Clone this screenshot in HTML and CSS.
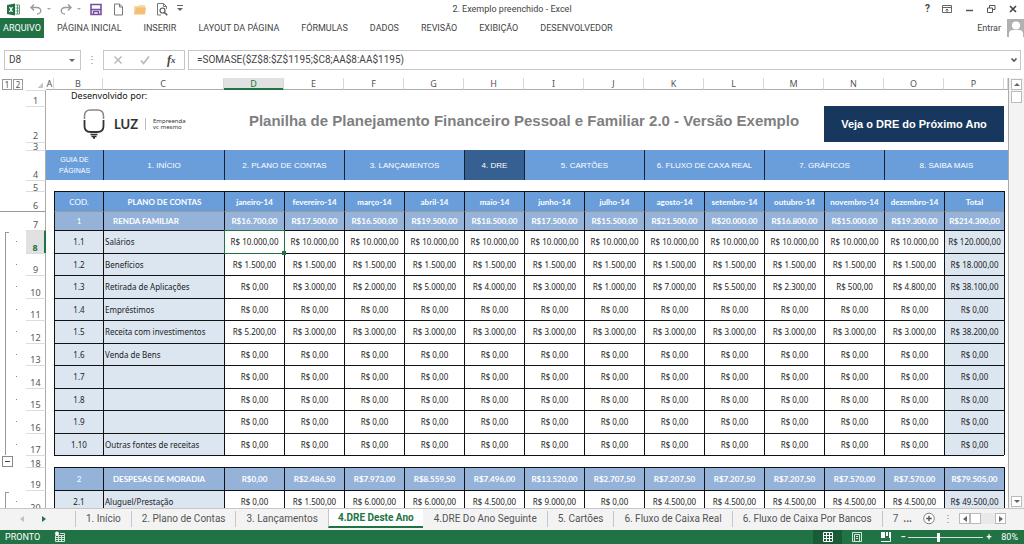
FILE: index.html
```html
<!DOCTYPE html>
<html lang="pt-BR">
<head>
<meta charset="utf-8">
<title>2. Exemplo preenchido - Excel</title>
<link rel="stylesheet" href="styles.css">
</head>
<body>
<header class="titlebar">
  <div class="quick">
    <svg class="icon" viewBox="0 0 14 13" aria-hidden="true"><path d="M0 2l8-1.500v12L0 11z" fill="#217346"/><path d="M8.500 2h4v9h-4M10.500 2v9M8.500 5h4M8.500 8h4" fill="none" stroke="#5b9b78"/><path d="M2.500 4l3 5M5.500 4l-3 5" stroke="#fff" stroke-width="1.300"/></svg>
    <button class="tool" aria-label="Desfazer"><svg class="icon" viewBox="0 0 14 13"><path d="M5 1.500L2 4.500l3 3M2 4.500h6a3.500 3 0 0 1 0 6.500" fill="none" stroke="#9a9a9a" stroke-width="1.400"/></svg></button>
    <i class="caret pale"></i>
    <button class="tool" aria-label="Refazer"><svg class="icon" viewBox="0 0 14 13"><path d="M9 1.500l3 3-3 3M12 4.500H6a3.500 3 0 0 0 0 6.500" fill="none" stroke="#9a9a9a" stroke-width="1.400"/></svg></button>
    <i class="caret pale"></i>
    <button class="tool save" aria-label="Salvar"><svg class="icon" viewBox="0 0 14 13"><path d="M2 1.500h10v10H2z" fill="#fff" stroke="#7a4fa3" stroke-width="1.600"/><path d="M2 6.500h10M4.500 12V8.500h5V12" fill="none" stroke="#7a4fa3" stroke-width="1.500"/></svg></button>
    <button class="tool" aria-label="Novo"><svg class="icon" viewBox="0 0 14 13"><path d="M3.500 1h5l3 3v8h-8zM8.500 1v3h3" fill="#fff" stroke="#777"/></svg></button>
    <button class="tool" aria-label="Abrir"><svg class="icon" viewBox="0 0 14 13"><path d="M1 11V3h4l1-1h6v3" fill="#f7d9a5"/><path d="M1 11.500l2-7h10l-1 7z" fill="#f3bf74"/></svg></button>
    <button class="tool" aria-label="Visualizar impressão"><svg class="icon" viewBox="0 0 14 13"><path d="M6 12H2.500V.5h6l3 3V6M8.500.5v3h3" fill="none" stroke="#777"/><circle cx="7.500" cy="7.500" r="2.500" fill="#fff" stroke="#555" stroke-width="1.200"/><path d="M9.500 9.500l2.800 2.800" stroke="#555" stroke-width="1.500"/></svg></button>
    <i class="caret bar"></i>
  </div>
  <h1 class="caption">2. Exemplo preenchido - Excel</h1>
  <div class="window-buttons">
    <button class="tool" aria-label="Ajuda"><b>?</b></button>
    <button class="tool" aria-label="Opções da faixa"><svg class="icon slim" viewBox="0 0 10 10"><path d="M.5 1.500h9v7h-9zM.5 3.500h9M5 8V5M3.500 6.300L5 5l1.500 1.300" fill="none" stroke="#666"/></svg></button>
    <button class="tool" aria-label="Minimizar"><svg class="icon slim" viewBox="0 0 10 10"><path d="M2 6.500h7" stroke="#555" stroke-width="1.500"/></svg></button>
    <button class="tool" aria-label="Restaurar"><svg class="icon slim" viewBox="0 0 10 10"><path d="M1.500 4h5v4.500h-5zM3.500 4V1.500h5.500v4H6.500" fill="none" stroke="#555"/></svg></button>
    <button class="tool" aria-label="Fechar"><svg class="icon slim" viewBox="0 0 10 10"><path d="M2 2l6 6M8 2l-6 6" stroke="#444" stroke-width="1.600"/></svg></button>
  </div>
</header>
<nav class="ribbon">
  <button class="file">ARQUIVO</button>
  <button>PÁGINA INICIAL</button>
  <button>INSERIR</button>
  <button>LAYOUT DA PÁGINA</button>
  <button>FÓRMULAS</button>
  <button>DADOS</button>
  <button>REVISÃO</button>
  <button>EXIBIÇÃO</button>
  <button>DESENVOLVEDOR</button>
  <a class="sign-in" href="#entrar">Entrar
    <svg class="avatar" viewBox="0 0 17 18" aria-hidden="true"><path d="M0 0h17v18H0z" fill="#b1b1b1"/><circle cx="9" cy="6.500" r="4" fill="#fff"/><path d="M2 18v-3q0-4 4-4h6q4 0 4 4v3z" fill="#fff"/></svg>
  </a>
</nav>
<div class="formula-bar">
  <label class="name-box"><input aria-label="Caixa de nome" value="D8"><i class="caret"></i></label>
  <span class="grip">⋮</span>
  <div class="formula-tools">
    <button class="tool" aria-label="Cancelar"><svg class="icon slim" viewBox="0 0 10 10"><path d="M1.500 1.500l7 7M8.500 1.500l-7 7" stroke="#b5b5b5" stroke-width="1.400"/></svg></button>
    <button class="tool" aria-label="Inserir"><svg class="icon slim" viewBox="0 0 10 10"><path d="M1 5.500l2.500 3L9 1.500" fill="none" stroke="#b5b5b5" stroke-width="1.500"/></svg></button>
    <button class="tool fx" aria-label="Inserir função">f<small>x</small></button>
  </div>
  <label class="formula"><input aria-label="Fórmula" value="=SOMASE($Z$8:$Z$1195;$C8;AA$8:AA$1195)"><svg class="icon slim" viewBox="0 0 10 10"><path d="M2.500 3.500L5 6l2.500-2.500" fill="none" stroke="#555" stroke-width="1.600"/></svg></label>
</div>
<main class="workspace">
  <div class="sheet">
    <table class="grid">
      <colgroup>
        <col class="w-outline"><col class="w-head"><col class="w-a"><col class="w-b"><col class="w-c">
        <col span="13">
        <col class="w-edge">
      </colgroup>
      <thead>
        <tr class="letters">
          <td class="levels"><div><button>1</button><button>2</button></div></td>
          <td class="corner"></td>
          <th>A</th><th>B</th><th>C</th><th class="picked">D</th><th>E</th><th>F</th><th>G</th><th>H</th><th>I</th><th>J</th><th>K</th><th>L</th><th>M</th><th>N</th><th>O</th><th>P</th><th></th>
        </tr>
      </thead>
      <tbody id="rows">
        <tr class="r1"><td></td><th>1</th><td></td><td class="credit" colspan="3">Desenvolvido por:</td><td colspan="13"></td></tr>
        <tr class="r2"><td></td><th>2</th><td></td>
          <td colspan="2">
            <div class="brand">
              <svg class="bulb" viewBox="0 0 22 30" aria-hidden="true"><path d="M1.500 10V7q0-6 6-6h7q6 0 6 6v3" fill="none" stroke="#888" stroke-width="1.500"/><path d="M1.500 11v6q0 6 6 6h7q6 0 6-6v-6" fill="none" stroke="#333" stroke-width="1.800"/><path d="M7.500 25.500h7M8.500 27.500h5M10 29h2" stroke="#333" stroke-width="1.300"/></svg>
              <strong>LUZ</strong><span>Empreenda<br>vc mesmo</span>
            </div>
          </td>
          <td class="sheet-title" colspan="10">Planilha de Planejamento Financeiro Pessoal e Familiar 2.0 - Versão Exemplo</td>
          <td colspan="3"><a class="next-year" href="#proximo">Veja o DRE do Próximo Ano</a></td><td></td>
        </tr>
        <tr class="r3"><td></td><th>3</th><td colspan="17"></td></tr>
        <tr class="r4"><td></td><th>4</th>
          <td class="guide" colspan="2">GUIA DE PÁGINAS</td>
          <td><a href="#inicio">1. INÍCIO</a></td>
          <td colspan="2"><a href="#plano">2. PLANO DE CONTAS</a></td>
          <td colspan="2"><a href="#lancamentos">3. LANÇAMENTOS</a></td>
          <td class="current"><a href="#dre">4. DRE</a></td>
          <td colspan="2"><a href="#cartoes">5. CARTÕES</a></td>
          <td colspan="2"><a href="#fluxo">6. FLUXO DE CAXA REAL</a></td>
          <td colspan="2"><a href="#graficos">7. GRÁFICOS</a></td>
          <td colspan="3"><a href="#mais">8. SAIBA MAIS</a></td>
        </tr>
        <tr class="r5"><td></td><th>5</th><td colspan="17"></td></tr>
      </tbody>
    </table>
  </div>
  <div class="scroll-v">
    <button class="step" aria-label="Para cima"><i class="caret up"></i></button>
    <div class="thumb"></div>
    <button class="step last" aria-label="Para baixo"><i class="caret"></i></button>
  </div>
</main>
<nav class="tabs">
  <div class="tab-arrows"><button class="tool" aria-label="Anterior"><i class="arrow left pale"></i></button><button class="tool" aria-label="Próxima"><i class="arrow right green"></i></button></div>
  <button class="tab">1. Início</button>
  <button class="tab">2. Plano de Contas</button>
  <button class="tab">3. Lançamentos</button>
  <button class="tab active">4.DRE Deste Ano</button>
  <button class="tab">4.DRE Do Ano Seguinte</button>
  <button class="tab">5. Cartões</button>
  <button class="tab">6. Fluxo de Caixa Real</button>
  <button class="tab">6. Fluxo de Caixa Por Bancos</button>
  <button class="tab cut">7 &nbsp;<b>...</b></button>
  <button class="tool" aria-label="Nova planilha"><svg class="icon" viewBox="0 0 14 14"><circle cx="7" cy="7" r="5.700" fill="#fff" stroke="#777"/><path d="M4 7h6M7 4v6" stroke="#555" stroke-width="1.500"/></svg></button>
  <span class="grip">⋮</span>
  <div class="scroll-h"><button class="step" aria-label="Esquerda"><i class="arrow left"></i></button><div class="thumb"></div><button class="step last" aria-label="Direita"><i class="arrow right"></i></button></div>
</nav>
<footer class="status">
  <span>PRONTO</span>
  <svg class="icon macro" viewBox="0 0 12 12" aria-hidden="true"><path d="M1.500 4.500h9v6h-9zM1.500 6.500h9M1.500 8.500h9M4.500 4.500v6M7.500 4.500v6M6 2.500h4.500v2" fill="none" stroke="#d5e6dc"/><circle cx="3" cy="2.500" r="2" fill="#fff"/></svg>
  <div class="views">
    <button class="view on" aria-label="Normal"><svg class="icon" viewBox="0 0 12 12"><path d="M1.500 1.500h9v9h-9zM1.500 4.500h9M1.500 7.500h9M4.500 1.500v9M7.500 1.500v9" fill="none" stroke="#fff"/></svg></button>
    <button class="view" aria-label="Layout da página"><svg class="icon" viewBox="0 0 12 12"><path d="M1.500 1.500h9v9h-9zM3.500 3.500h5v7h-5zM5 5.500h2M5 7.500h2" fill="none" stroke="#d5e6dc"/></svg></button>
    <button class="view" aria-label="Quebra de página"><svg class="icon" viewBox="0 0 12 12"><path d="M1 1h4v6H1zM6 1h2v4H6zM9 1h2v6H9z" fill="#fff"/><path d="M1 10.500h9.500V1" fill="none" stroke="#fff"/></svg></button>
  </div>
  <div class="zoom"><b>−</b><input type="range" aria-label="Zoom" min="10" max="200" value="86"><b>+</b></div>
  <span>80%</span>
</footer>
<script src="rows.js"></script>
</body>
</html>
```
FILE: styles.css
```css
* { box-sizing: border-box; }
body {
  margin: 0;
  height: 100vh;
  display: flex;
  flex-direction: column;
  overflow: hidden;
  background: #fff;
  color: #444;
  font: 10px/12px Roboto, "Noto Sans", sans-serif;
}
button, input { margin: 0; padding: 0; border: 0; background: none; color: inherit; font: inherit; }
a { color: inherit; text-decoration: none; }
.tool { display: flex; align-items: center; justify-content: center; }
.icon { display: block; width: 14px; height: 13px; }
.icon.slim { width: 10px; height: 10px; }
.caret { border: 3px solid transparent; border-top-color: #666; border-bottom: 0; }
.caret.pale { border-width: 2px 2px 0; border-top-color: #aaa; }
.caret.up { border-top: 0; border-bottom: 3px solid #666; }
.caret.bar { position: relative; }
.caret.bar::before { content: ""; position: absolute; left: -3px; top: -6px; width: 6px; height: 1px; background: #666; }
.arrow { border: 3px solid transparent; }
.arrow.left { border-right: 4px solid #666; border-left: 0; }
.arrow.right { border-left: 4px solid #666; border-right: 0; }
.arrow.left.pale { border-right-color: #c0c0c0; }
.arrow.right.green { border-left-color: #217346; }

.titlebar { display: grid; grid-template-columns: 1fr auto 1fr; align-items: center; height: 18px; flex: none; }
.quick { display: flex; align-items: center; gap: 4px; padding-left: 7px; }
.quick .tool:not(.save) { margin-left: 4px; }
.quick .save { margin-left: 4px; }
.quick .caret.bar { margin-left: 4px; }
.caption { margin: 0; font-size: 9px; font-weight: 400; }
.window-buttons { display: flex; justify-content: flex-end; gap: 12px; padding-right: 6px; }

.ribbon { display: flex; align-items: center; gap: 22px; height: 20px; flex: none; font-size: 9px; }
.ribbon .file { align-self: stretch; width: 44px; margin-right: -9px; background: #217346; color: #fff; }
.sign-in { display: flex; align-items: center; gap: 6px; margin-left: auto; }
.avatar { width: 17px; height: 18px; }

.formula-bar { display: flex; height: 20px; margin: 12px 3px 8px 4px; flex: none; }
.name-box, .formula, .formula-tools { display: flex; align-items: center; border: 1px solid #c6c6c6; }
.name-box { width: 77px; padding: 0 5px 0 4px; }
.name-box input { flex: 1; min-width: 0; }
.grip { width: 22px; text-align: center; line-height: 20px; color: #888; }
.formula-tools { width: 82px; justify-content: space-around; }
.fx { font: italic 700 12px/14px "Liberation Serif", serif; }
.fx small { font-size: 9px; }
.formula { flex: 1; margin-left: 3px; padding: 0 1px 0 8px; }
.formula input { flex: 1; min-width: 0; }

.workspace { display: flex; flex: 1; min-height: 0; overflow: hidden; }
.sheet { flex: 1; min-width: 0; overflow: hidden; }
.grid { width: 100%; table-layout: fixed; border-collapse: separate; border-spacing: 0; color: #222; font: 8px/10px "Noto Sans", "Open Sans", sans-serif; text-align: center; }
.grid td, .grid th { padding: 0; font-weight: 400; }
.w-outline { width: 26px; }
.w-head { width: 20px; }
.w-a { width: 8px; }
.w-b { width: 49px; }
.w-c { width: 121px; }
.w-edge { width: 4px; }

.letters { height: 12px; color: #555; font-size: 9px; line-height: 11px; }
.letters th { border-right: 1px solid #d8d8d8; border-bottom: 1px solid #ababab; }
.letters .picked { background: #e1e1e1; border-bottom-color: #217346; box-shadow: inset 0 -1px #217346; color: #217346; }
.levels div { display: flex; gap: 1px; padding-left: 2px; }
.levels button { width: 10px; height: 11px; border: 1px solid #999; font-size: 8px; line-height: 9px; }
.corner { background: linear-gradient(135deg, transparent 60%, #c8c8c8 60%) 10px 3px / 7px 7px no-repeat; }

.grid tbody th { border-right: 1px solid #ababab; border-top: 1px solid #dcdcdc; color: #555; font-size: 9px; line-height: 7px; vertical-align: bottom; }
.grid tbody .r1 th, .grid tbody .r4 th, .grid tbody .n:not(.gap) th { padding-bottom: 2px; }
.grid tbody .r2 th { padding-bottom: 3px; }
.r1 { height: 16px; }
.r2 { height: 36px; }
.r3 { height: 8px; }
.r4 { height: 30px; }
.r5 { height: 11px; }
.grid .credit { padding-left: 17px; text-align: left; vertical-align: top; font-size: 9px; line-height: 12px; color: #111; }
.brand { display: flex; align-items: center; padding-left: 29px; text-align: left; color: #333; }
.bulb { width: 22px; height: 30px; }
.brand strong { margin: 0 7px 0 9px; font: 700 13px/16px Lato, sans-serif; }
.brand span { padding-left: 7px; border-left: 1px solid #bbb; font-size: 6px; line-height: 6px; }
.grid .sheet-title { padding-bottom: 6px; color: #7f7f7f; font: 700 15px/20px "Liberation Sans", sans-serif; white-space: nowrap; }
.next-year { display: flex; align-items: center; justify-content: center; height: 36px; background: #17375e; color: #fff; font: 700 11px/14px "Liberation Sans", sans-serif; }
.r4 td:not(:first-child) { background: #6a9eda; color: #fff; border-left: 1px solid #17202e; font: 8px/11px "Liberation Sans", sans-serif; }
.grid .r4 .guide { padding: 0 8px; border-left: 0; font-size: 7px; }
.grid .r4 .current { background: #376092; }

.n { height: 22px; }
.n.tall { height: 23px; }
.n.labels { height: 20px; }
.n.gap { height: 12px; }
.n.freeze { height: 19px; }
.cell { border-left: 1px solid #111; border-top: 1px solid #111; white-space: nowrap; }
.edge { border-left: 1px solid #111; }
.gap .cell, .gap .edge { border-left: 0; }
.code, .name, .sum { background: #dce6f1; }
.grid .name { padding-left: 1px; text-align: left; }
.grid .labels .cell, .grid .head .cell { color: #fff; font-weight: 700; font-family: Lato, sans-serif; }
.labels .cell { background: #6a9eda; }
.head .cell { background: #95b3d9; }
.grid .labels .code, .grid .head .code { font-weight: 400; }
.grid .labels .name { text-align: center; }
.grid .head .name { padding-left: 9px; }
.freeze .cell, .grid .freeze th, .freeze .edge { border-top-color: #9a9a9a; }
.freeze .side { border-top: 1px solid #9a9a9a; }
.group { background: linear-gradient(#888, #888) 16px 50% / 1px 1px no-repeat, linear-gradient(#999, #999) 5px 0 / 1px 100% no-repeat; }
.group.first { background: linear-gradient(#888, #888) 16px 50% / 1px 1px no-repeat, linear-gradient(#999, #999) 5px 2px / 1px 100% no-repeat, linear-gradient(#999, #999) 5px 2px / 4px 1px no-repeat; }
.collapse { display: block; width: 11px; height: 11px; margin-left: 2px; border: 1px solid #888; background: linear-gradient(#444, #444) 50% 50% / 5px 1px no-repeat #fff; }
.grid tbody .picked-row th { background: #e1e1e1; color: #217346; font-weight: 700; border-right: 2px solid #217346; }
.selected { position: relative; }
.selected::before { content: ""; position: absolute; inset: -1px -1px -1px -1px; border: 1px solid #217346; z-index: 1; }
.selected::after { content: ""; position: absolute; right: -2px; bottom: -2px; width: 4px; height: 4px; background: #217346; z-index: 2; }

.scroll-v { display: flex; flex-direction: column; width: 16px; padding: 1px 2px; gap: 1px; border-left: 1px solid #ababab; background: #f3f3f3; }
.step { display: flex; align-items: center; justify-content: center; width: 11px; height: 11px; border: 1px solid #bbb; background: #fff; }
.thumb { width: 11px; height: 12px; border: 1px solid #bbb; background: #fff; }
.scroll-v .last { margin-top: auto; }

.tabs { display: flex; align-items: center; height: 22px; flex: none; padding: 0 18px 2px 0; border-top: 1px solid #c6c6c6; background: #f3f3f3; color: #555; font-size: 10px; }
.tab-arrows { display: flex; flex: none; gap: 18px; width: 75px; padding-left: 20px; }
.tab { height: 16px; padding: 0 10px; border-left: 1px solid #c6c6c6; white-space: nowrap; }
.tab.active { align-self: stretch; height: auto; padding: 0 9px; border-bottom: 2px solid #217346; background: #fff; color: #217346; font-weight: 700; }
.tab.active + .tab { border-left-color: transparent; }
.tabs .grip { margin-left: auto; }
.scroll-h { display: flex; background: #e9e9e9; width: 47px; }
.scroll-h .step, .scroll-h .thumb { flex: none; height: 11px; }
.scroll-h .last { margin-left: auto; }

.status { display: flex; align-items: center; height: 14px; flex: none; padding: 0 6px 0 5px; background: #217346; color: #fff; font-size: 9px; }
.status .icon { width: 12px; height: 12px; }
.macro { margin-left: 14px; }
.views { display: flex; margin-left: auto; }
.view { display: flex; align-items: center; justify-content: center; width: 29px; height: 14px; }
.view.on { background: #185c37; }
.zoom { display: flex; align-items: center; gap: 3px; margin: 0 10px 0 0; }
.zoom input { width: 75px; height: 10px; appearance: none; background: linear-gradient(#cfe3d7, #cfe3d7) 0 50% / 100% 1px no-repeat; }
.zoom input::-webkit-slider-thumb { appearance: none; width: 3px; height: 9px; background: #fff; }
```
FILE: rows.js
```js
const zeros = Array(13).fill("0,00");
const same = (value, total) => [...Array(12).fill(value), total];

const rows = [
  { n: 6, kind: "labels", code: "COD.", name: "PLANO DE CONTAS", values: ["janeiro-14", "fevereiro-14", "março-14", "abril-14", "maio-14", "junho-14", "julho-14", "agosto-14", "setembro-14", "outubro-14", "novembro-14", "dezembro-14", "Total"] },
  { n: 7, kind: "head freeze", code: "1", name: "RENDA FAMILIAR", values: ["16.700,00", "17.500,00", "16.500,00", "19.500,00", "18.500,00", "17.500,00", "15.500,00", "21.500,00", "20.000,00", "16.800,00", "15.000,00", "19.300,00", "214.300,00"] },
  { n: 8, kind: "tall picked-row", group: "group first", code: "1.1", name: "Salários", values: same("10.000,00", "120.000,00") },
  { n: 9, kind: "", group: "group", code: "1.2", name: "Benefícios", values: same("1.500,00", "18.000,00") },
  { n: 10, kind: "tall", group: "group", code: "1.3", name: "Retirada de Aplicações", values: ["0,00", "3.000,00", "2.000,00", "5.000,00", "4.000,00", "3.000,00", "1.000,00", "7.000,00", "5.500,00", "2.300,00", "500,00", "4.800,00", "38.100,00"] },
  { n: 11, kind: "", group: "group", code: "1.4", name: "Empréstimos", values: zeros },
  { n: 12, kind: "tall", group: "group", code: "1.5", name: "Receita com investimentos", values: ["5.200,00", ...Array(11).fill("3.000,00"), "38.200,00"] },
  { n: 13, kind: "", group: "group", code: "1.6", name: "Venda de Bens", values: zeros },
  { n: 14, kind: "tall", group: "group", code: "1.7", name: "", values: zeros },
  { n: 15, kind: "", group: "group", code: "1.8", name: "", values: zeros },
  { n: 16, kind: "tall", group: "group", code: "1.9", name: "", values: zeros },
  { n: 17, kind: "", group: "group", code: "1.10", name: "Outras fontes de receitas", values: zeros },
  { n: 18, kind: "gap" },
  { n: 19, kind: "tall head", code: "2", name: "DESPESAS DE MORADIA", values: ["0,00", "2.486,50", "7.973,00", "8.559,50", "7.496,00", "13.520,00", "2.707,50", "7.207,50", "7.207,50", "7.207,50", "7.570,00", "7.570,00", "79.505,00"] },
  { n: 20, kind: "tall", group: "group first", code: "2.1", name: "Aluguel/Prestação", values: ["0,00", "1.500,00", "6.000,00", "6.000,00", "4.500,00", "9.000,00", "0,00", "4.500,00", "4.500,00", "4.500,00", "4.500,00", "4.500,00", "49.500,00"] }
];

function cells(row) {
  if (row.kind === "gap") return '<td class="cell" colspan="15"></td>';
  const prefix = row.kind === "labels" ? "" : row.kind.includes("head") ? "R$" : "R$ ";
  const values = row.values.map((value, i) => {
    const extra = (i === 12 ? " sum" : "") + (row.n === 8 && i === 0 ? " selected" : "");
    return `<td class="cell${extra}">${prefix}${value}</td>`;
  });
  return `<td class="cell code">${row.code}</td><td class="cell name">${row.name}</td>${values.join("")}`;
}

document.getElementById("rows").insertAdjacentHTML("beforeend", rows.map((row) => {
  const side = row.kind === "gap" ? '<button class="collapse" aria-label="Recolher grupo"></button>' : "";
  return `<tr class="n ${row.kind}"><td class="side ${row.group || ""}">${side}</td><th>${row.n}</th><td></td>${cells(row)}<td class="edge"></td></tr>`;
}).join(""));
```
